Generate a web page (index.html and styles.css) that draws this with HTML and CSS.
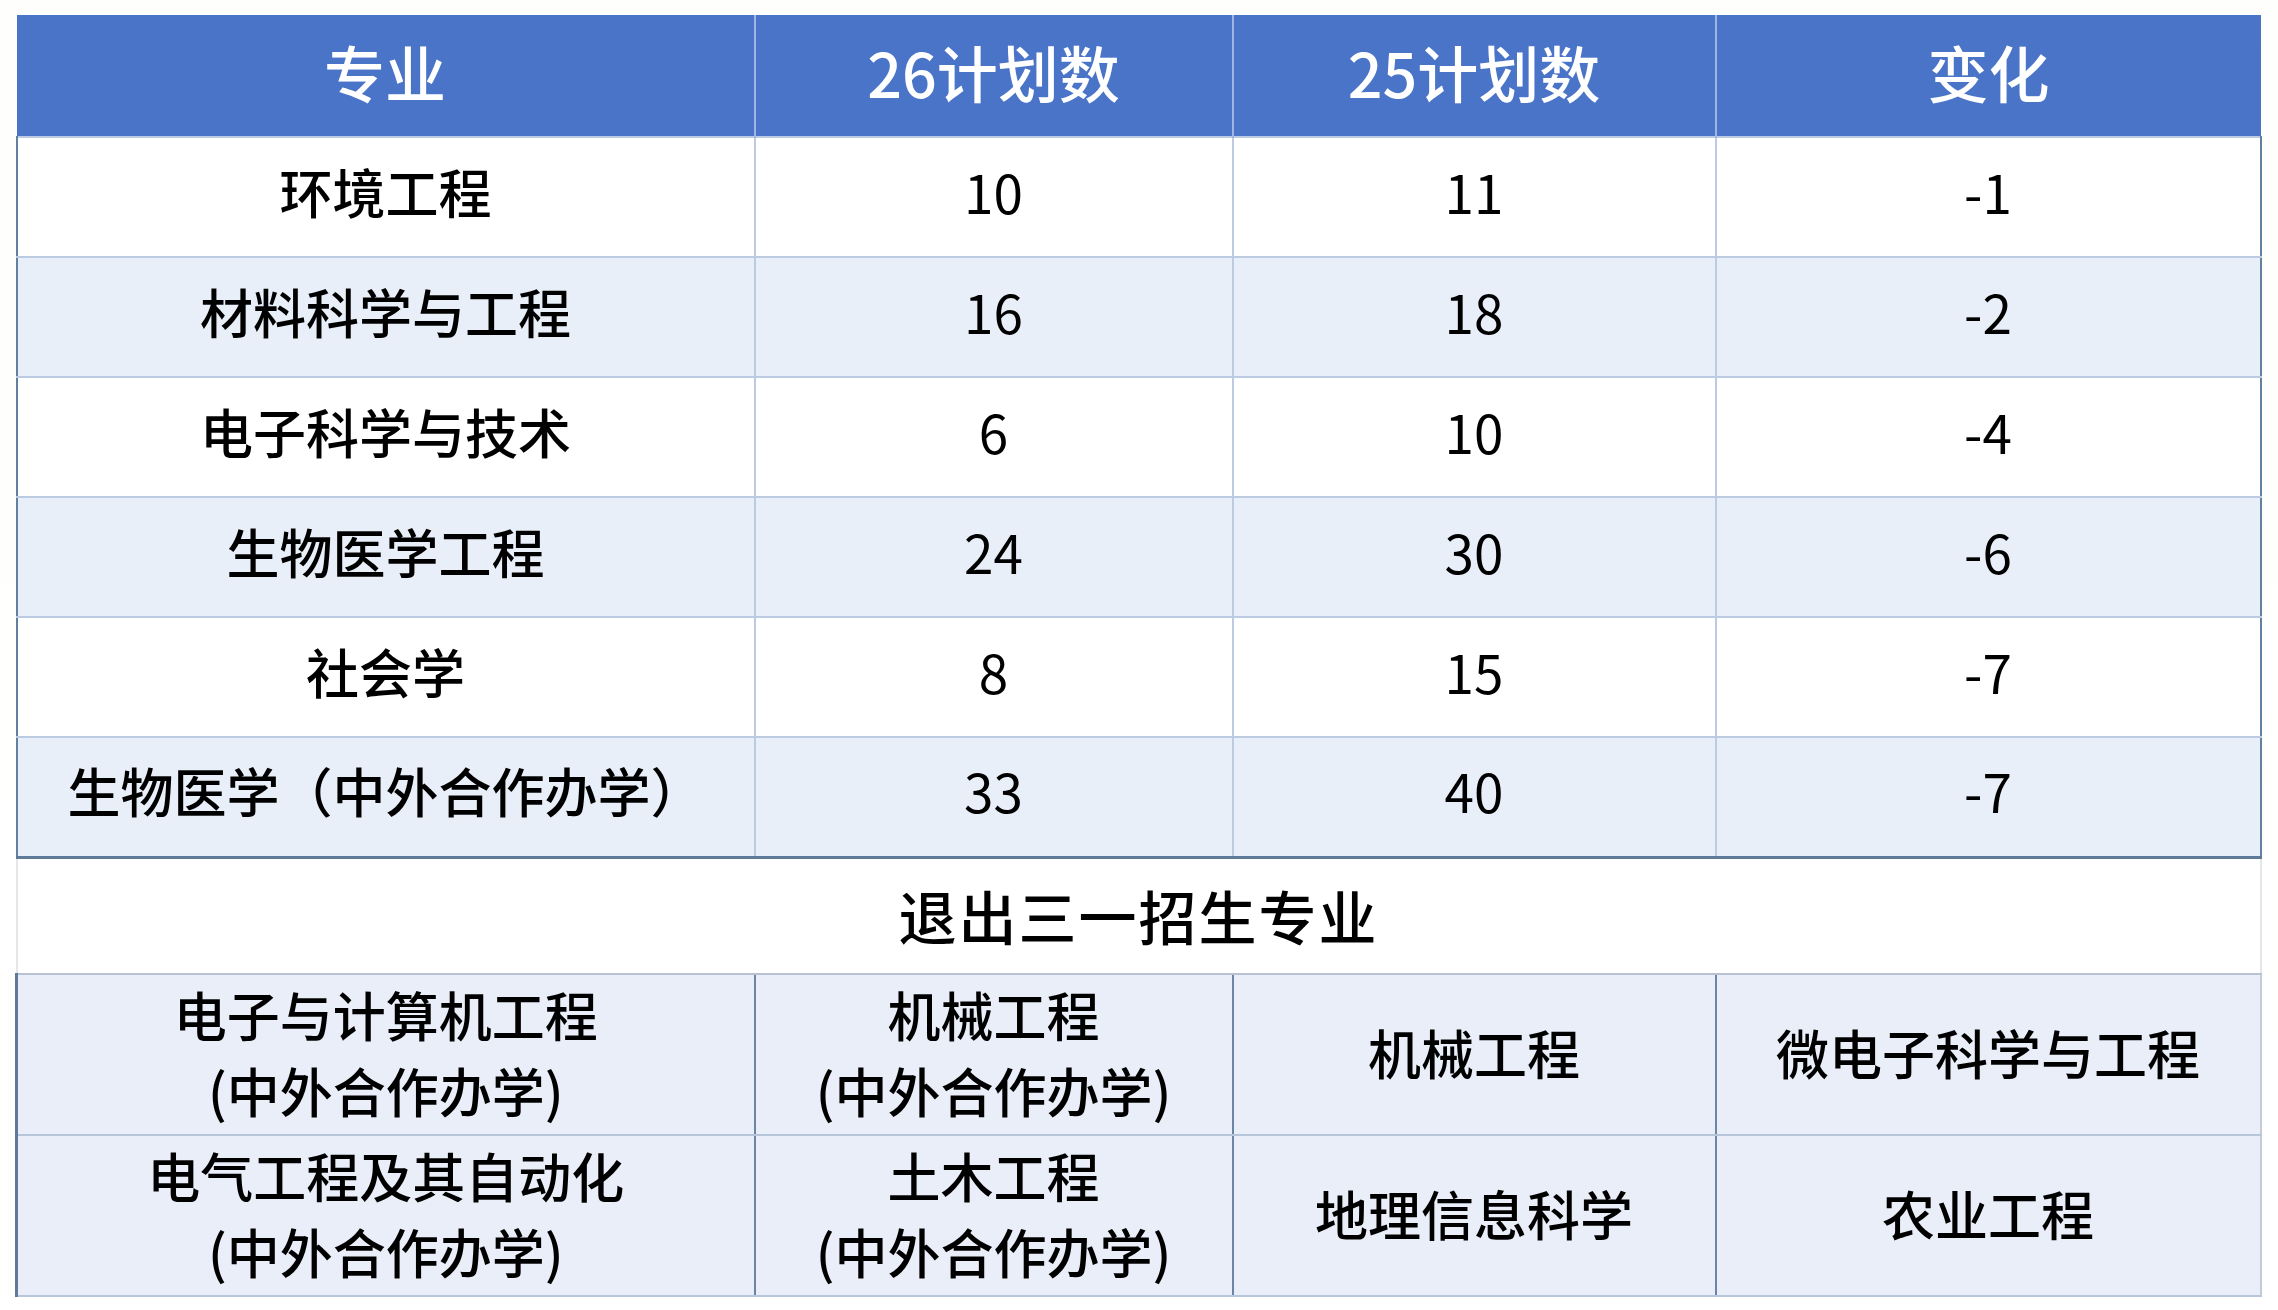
FILE: index.html
```html
<!DOCTYPE html>
<html lang="zh-CN">
<head>
<meta charset="utf-8">
<title>计划数变化</title>
<link rel="stylesheet" href="styles.css">
</head>
<body>
<div class="page">
  <table class="plan">
    <colgroup>
      <col class="c1"><col class="c2"><col class="c3"><col class="c4">
    </colgroup>
    <thead>
      <tr class="head">
        <th>专业</th><th>26计划数</th><th>25计划数</th><th>变化</th>
      </tr>
    </thead>
    <tbody class="main">
      <tr class="row"><td>环境工程</td><td>10</td><td>11</td><td>-1</td></tr>
      <tr class="row alt"><td>材料科学与工程</td><td>16</td><td>18</td><td>-2</td></tr>
      <tr class="row"><td>电子科学与技术</td><td>6</td><td>10</td><td>-4</td></tr>
      <tr class="row alt"><td>生物医学工程</td><td>24</td><td>30</td><td>-6</td></tr>
      <tr class="row"><td>社会学</td><td>8</td><td>15</td><td>-7</td></tr>
      <tr class="row alt last"><td>生物医学（中外合作办学）</td><td>33</td><td>40</td><td>-7</td></tr>
    </tbody>
    <tbody class="exit">
      <tr class="section"><td colspan="4">退出三一招生专业</td></tr>
      <tr class="tall first"><td>电子与计算机工程<br>(中外合作办学)</td><td>机械工程<br>(中外合作办学)</td><td>机械工程</td><td>微电子科学与工程</td></tr>
      <tr class="tall"><td>电气工程及其自动化<br>(中外合作办学)</td><td>土木工程<br>(中外合作办学)</td><td>地理信息科学</td><td>农业工程</td></tr>
    </tbody>
  </table>
</div>
</body>
</html>
```

FILE: styles.css
```css
* { box-sizing: border-box; }

html, body {
  margin: 0;
  padding: 0;
  background: #ffffff;
}

body {
  font-family: "Noto Sans CJK SC", "Noto Sans", sans-serif;
  color: #000;
}

.page {
  padding: 15px 15px 0 15px;
  width: 2278px;
  height: 1310px;
  background: linear-gradient(180deg, #fefefd 0%, #ffffff 100%);
}

.plan {
  width: 2244px;
  border-collapse: collapse;
  table-layout: fixed;
}

.c1 { width: 738px; }
.c2 { width: 478px; }
.c3 { width: 483px; }
.c4 { width: 545px; }

.head th {
  height: 122px;
  background: #4a74c8;
  color: #fff;
  font-size: 61px;
  font-weight: 500;
  text-align: center;
  vertical-align: middle;
  padding: 0 0 9px 0;
  border-left: 2px solid #9db6e3;
  line-height: 1;
}
.head th:first-child { border-left: none; }

td {
  text-align: center;
  vertical-align: middle;
  padding: 0 0 12px 0;
  font-size: 53px;
  font-weight: 400;
  line-height: 1;
  border: 2px solid #bccbe2;
}

.main td:first-child { font-weight: 500; }

.row { height: 120px; background: #fff; }
.row.alt { background: #e9eff9; }

.main td:first-child { border-left: 2px solid #62809f; }
.main td:last-child { border-right: 2px solid #62809f; }
.main .last td { border-bottom: 3px solid #5f7a98; }

.section td {
  height: 117px;
  background: #ffffff;
  font-size: 58px;
  font-weight: 500;
  padding: 0 0 2px 0;
  border-left: 2px solid #e4e6ea;
  border-right: 2px solid #e4e6ea;
  border-top: 3px solid #5f7a98;
  border-bottom: 2px solid #b8c2d2;
  letter-spacing: 2px;
}

.tall { height: 161px; background: #e9eef9; }
.tall td {
  line-height: 76px;
  font-weight: 500;
  padding: 0 0 5px 0;
  border-top: 2px solid #b8c6dc;
  border-bottom: 2px solid #b8c6dc;
  border-left: 2px solid #6a85a6;
  border-right: 2px solid #6a85a6;
}
.tall td:last-child { border-right: 2px solid #c3cbd8; }
.tall td:first-child { border-left: 3px solid #5f7a98; }
```
